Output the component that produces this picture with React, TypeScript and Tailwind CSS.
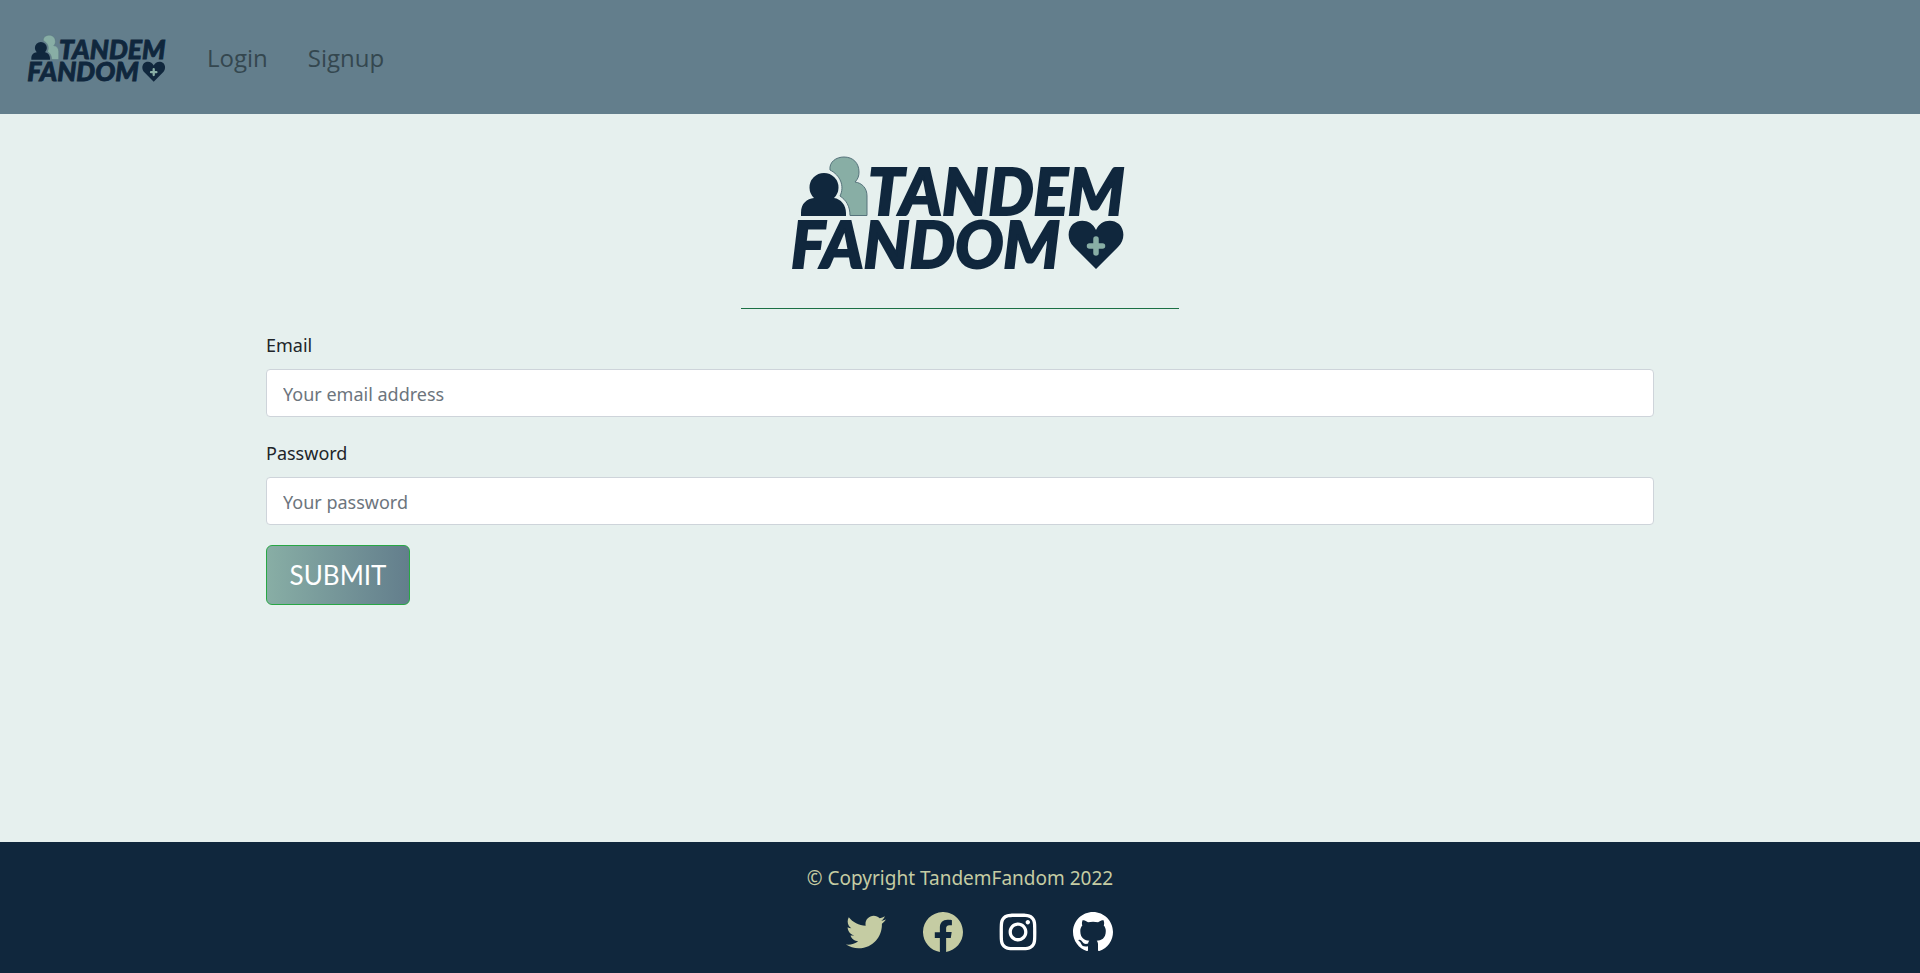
import React from 'react';
import { BsFacebook, BsGithub } from 'react-icons/bs';
import { FaInstagram, FaTwitter } from 'react-icons/fa';

function Logo({ className }: { className: string }) {
  return (
    <svg viewBox="3 -1 335 118" className={`overflow-visible ${className}`} role="img" aria-label="Tandem Fandom">
      <path
        d="M40 15C39 7 46 2 54 2C63 2 69 8 69 17C69 21 68 24 65 27C72 28 77 33 77 41V60.500H60C60 51 56 45 50 41C55 31 50 20 40 15Z"
        fill="#88aea5" stroke="#56737b" strokeWidth="1"
      />
      <path
        d="M11 61V58C11 48 17 44 24 43A14.500 14.500 0 1 1 44 43C51 44 56 50 56 58V61Z"
        fill="#10273d"
      />
      <g
        fill="#10273d" stroke="#10273d" strokeWidth="2"
        fontFamily="Lato, sans-serif" fontWeight="900" fontStyle="italic" fontSize="64"
      >
        <text x="78" y="60">TANDEM</text>
        <text x="1" y="113">FANDOM</text>
      </g>
      <path
        d="M306 114L284 92C277 85 277 75 283 69C290 63 302 65 306 75C310 65 322 63 329 69C335 75 335 85 328 92Z"
        fill="#10273d"
      />
      <path d="M306 84V98M299.500 91H312.500" stroke="#88aea5" strokeWidth="5.500" strokeLinecap="round" />
    </svg>
  );
}

function Field({ id, label, type, placeholder }: { id: string; label: string; type: string; placeholder: string }) {
  return (
    <div className="mb-5">
      <label htmlFor={id} className="mb-2 block leading-8">{label}</label>
      <input
        id={id}
        type={type}
        placeholder={placeholder}
        className="block h-12 w-full rounded border border-[#ced4da] bg-white px-4 pt-0.5 placeholder:text-[#6c757d]"
      />
    </div>
  );
}

export default function App() {
  return (
    <div className="flex min-h-screen flex-col bg-[#e6f0ee] font-['Noto_Sans',sans-serif] text-lg text-[#212529]">
      <nav className="flex h-[114px] items-center gap-10 bg-[#637e8c] px-7 pt-0.5 font-['Open_Sans',sans-serif] text-2xl text-[#34474f]">
        <a href="#home"><Logo className="w-[139px]" /></a>
        <a href="#login">Login</a>
        <a href="#signup">Signup</a>
      </nav>
      <main className="mx-auto w-full max-w-[1388px] flex-1">
        <Logo className="mx-auto mt-10 w-[335px]" />
        <hr className="mx-auto mt-9 mb-5 h-px w-[438px] border-0 bg-[#1b7044]" />
        <form onSubmit={(e) => e.preventDefault()}>
          <Field id="email" label="Email" type="email" placeholder="Your email address" />
          <Field id="password" label="Password" type="password" placeholder="Your password" />
          <button
            type="submit"
            className="h-[60px] w-36 rounded-md border border-[#28a745] bg-linear-to-r from-[#88aea5] to-[#637e8c] font-['Lato',sans-serif] text-[26px] text-white"
          >
            SUBMIT
          </button>
        </form>
      </main>
      <footer className="flex h-[131px] justify-center bg-[#10273d] pt-[22px] text-[#c5cca3]">
        <div className="flex flex-col items-end">
          <p className="text-[19px] leading-7">© Copyright TandemFandom 2022</p>
          <div className="mt-5 flex h-10 items-center gap-[37px] text-[40px]">
            <a href="#twitter" aria-label="Twitter"><FaTwitter /></a>
            <a href="#facebook" aria-label="Facebook"><BsFacebook /></a>
            <a href="#instagram" aria-label="Instagram" className="flex w-9 justify-center text-[42px] text-white">
              <FaInstagram className="shrink-0" />
            </a>
            <a href="#github" aria-label="GitHub" className="text-white"><BsGithub /></a>
          </div>
        </div>
      </footer>
    </div>
  );
}
